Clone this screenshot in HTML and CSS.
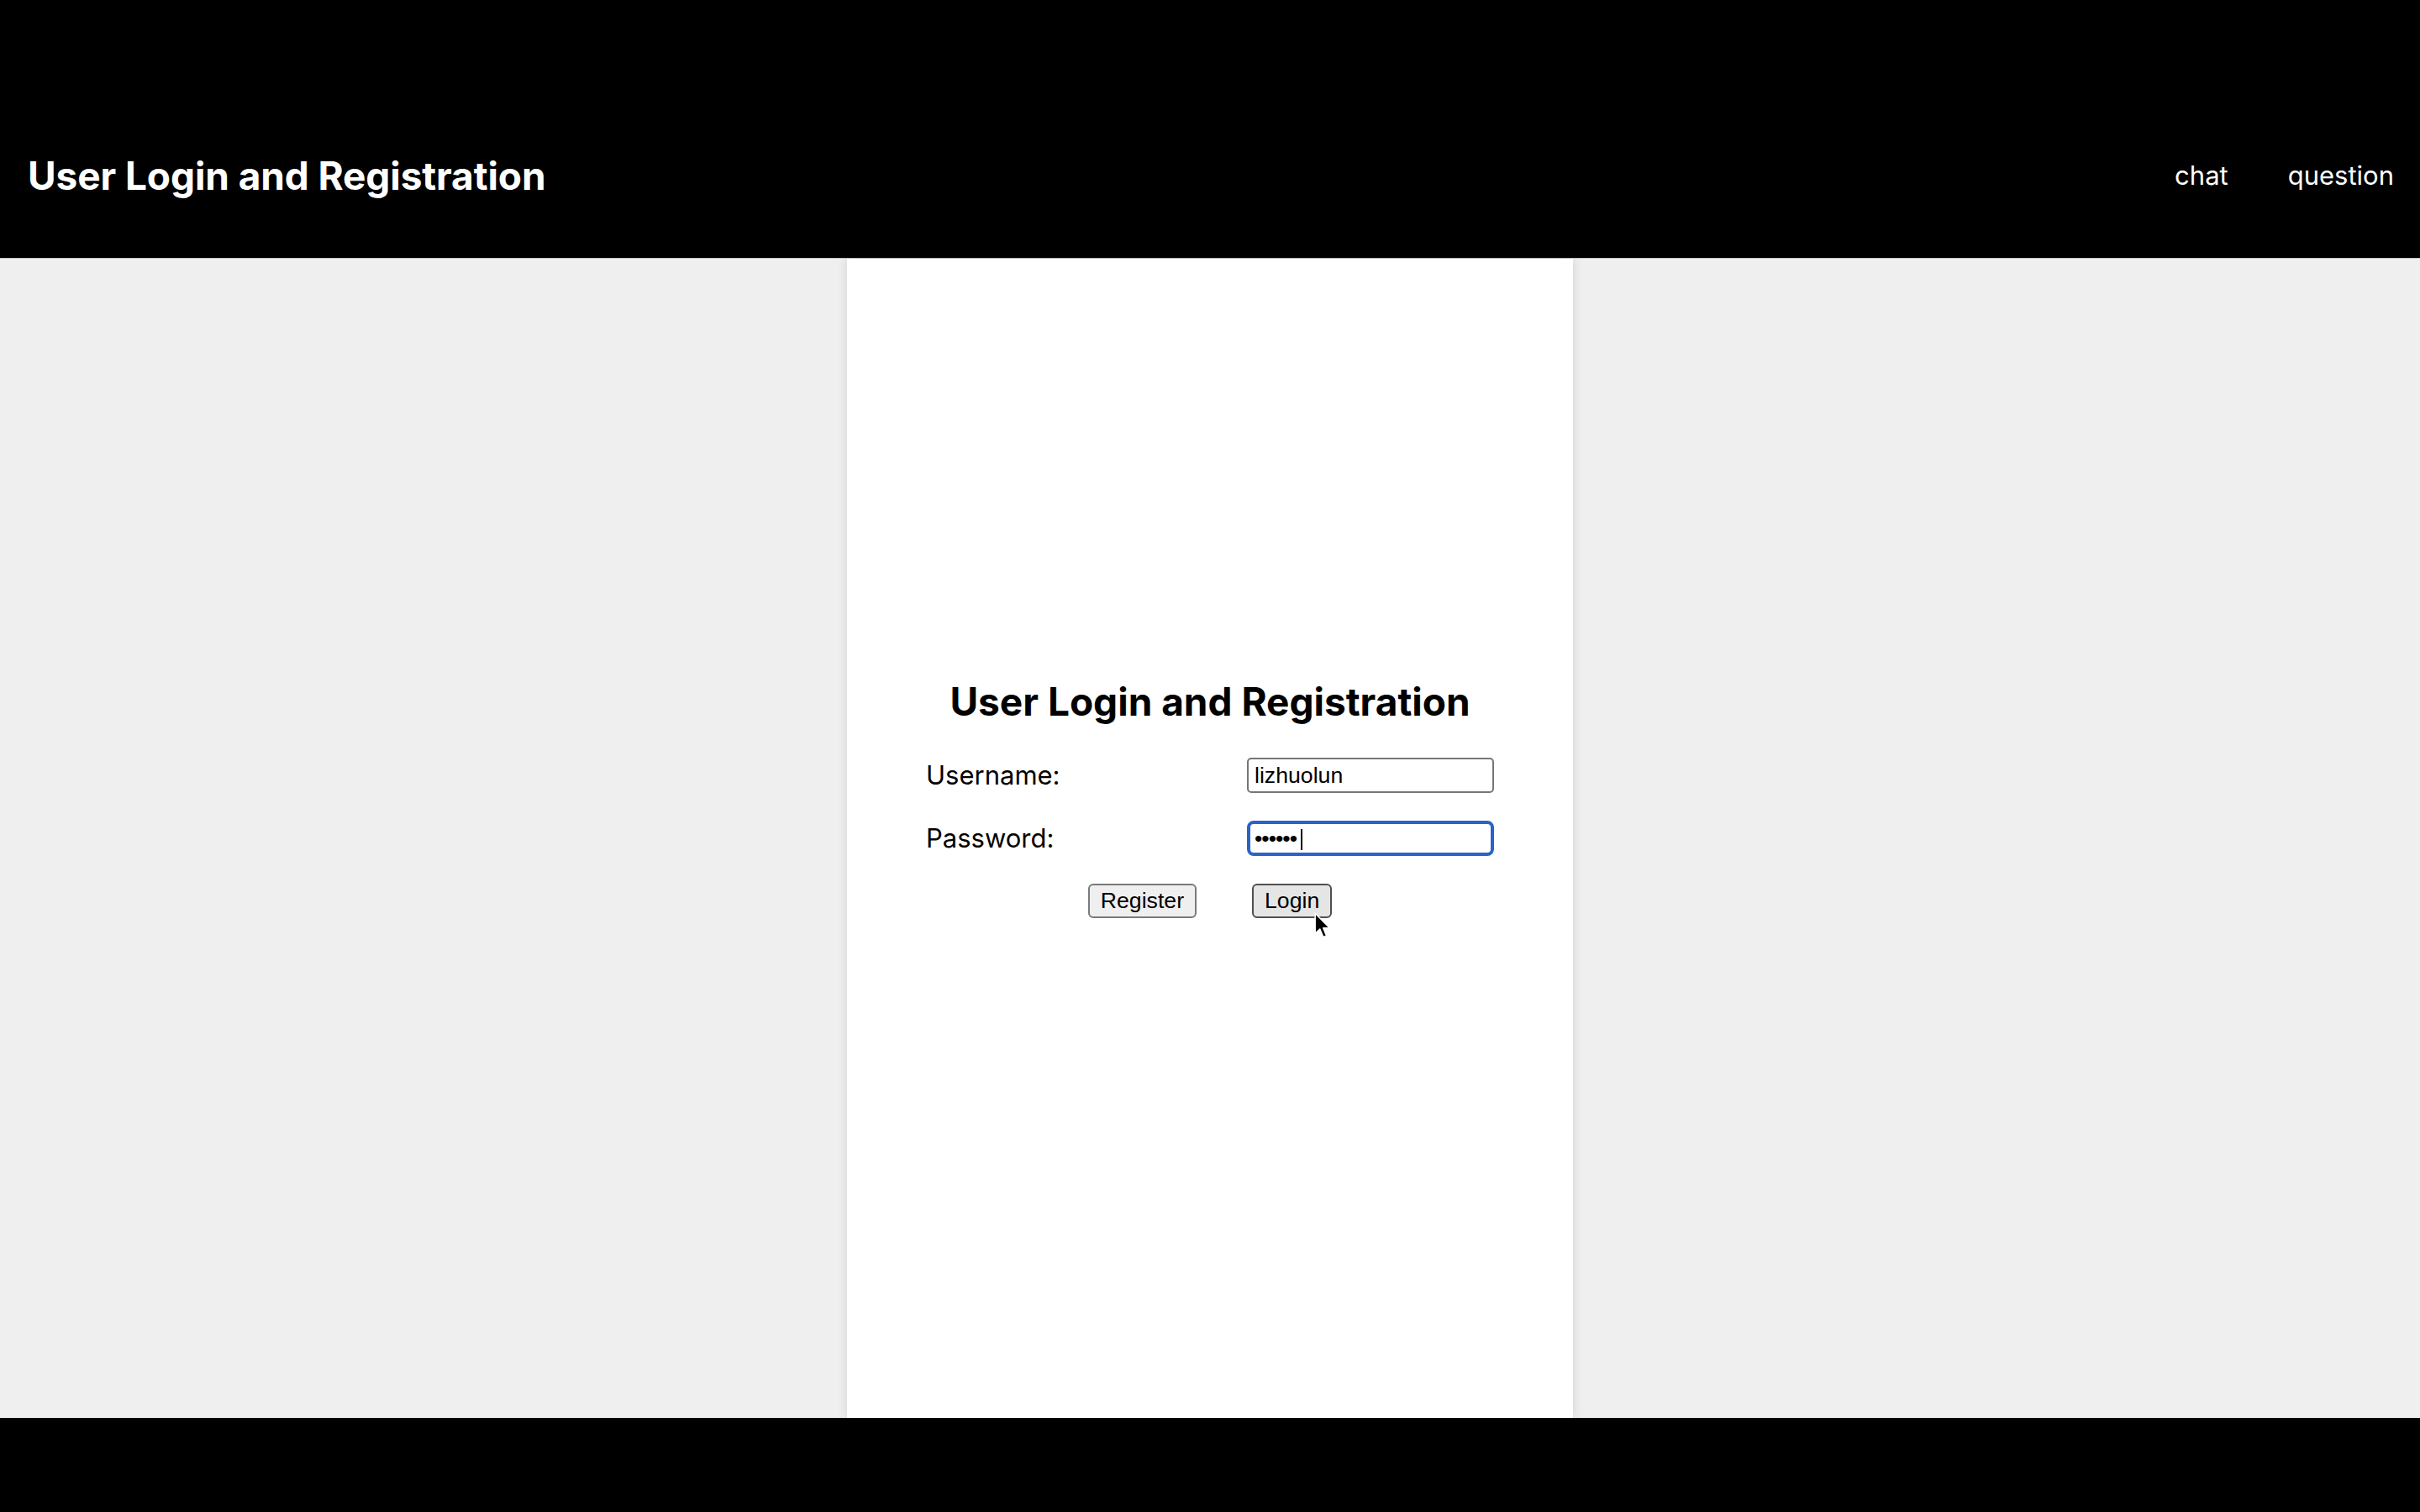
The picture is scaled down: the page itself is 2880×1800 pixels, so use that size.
FILE: index.html
```html
<!DOCTYPE html>
<html lang="en">
<head>
<meta charset="utf-8">
<title>User Login and Registration</title>
<link rel="stylesheet" href="styles.css">
</head>
<body>
<header class="site-header">
  <h1 class="site-title">User Login and Registration</h1>
  <nav class="site-nav">
    <a class="nav-link" href="#">chat</a>
    <a class="nav-link" href="#">question</a>
  </nav>
</header>
<main class="page">
  <section class="card">
    <h2 class="form-title">User Login and Registration</h2>
    <form class="login-form" onsubmit="return false;">
      <label class="field-label" for="username">Username:</label>
      <input class="field-input" id="username" type="text" value="lizhuolun">
      <label class="field-label" for="password">Password:</label>
      <span class="input-wrap">
        <input class="field-input field-input--focused" id="password" type="password" value="123456">
        <span class="caret"></span>
      </span>
      <div class="actions">
        <button class="btn" type="button">Register</button>
        <span class="btn-wrap">
          <button class="btn btn--hover" type="submit">Login</button>
          <svg class="pointer" width="20" height="32" viewBox="0 0 17 27" aria-hidden="true">
            <path d="M1 1 L1 21.5 L5.8 16.9 L9.2 25 L12.4 23.6 L9.1 15.8 L15.6 15.8 Z" fill="#000" stroke="#fff" stroke-width="1.3" stroke-linejoin="round"/>
          </svg>
        </span>
      </div>
    </form>
  </section>
</main>
<footer class="site-footer"></footer>
</body>
</html>
```

FILE: styles.css
```css
html, body {
  margin: 0;
  padding: 0;
  height: 100%;
}

body {
  display: flex;
  flex-direction: column;
  min-height: 1800px;
  background: #efefef;
  font-family: Inter, "Noto Sans", sans-serif;
  color: #000;
}

.site-header {
  height: 307px;
  box-sizing: border-box;
  padding: 110px 31px 0 33px;
  background: #000;
  border-bottom: 1px solid #c4c4c4;
  display: flex;
  align-items: center;
  justify-content: space-between;
  flex: 0 0 auto;
  height: 308px;
}

.site-title {
  margin: 0;
  font-size: 46px;
  line-height: 56px;
  font-weight: 700;
  color: #fff;
  letter-spacing: -0.1px;
}

.site-nav {
  display: flex;
  gap: 71px;
}

.nav-link {
  color: #fff;
  text-decoration: none;
  font-size: 31px;
  line-height: 40px;
}

.page {
  flex: 1 1 auto;
  display: flex;
  justify-content: center;
}

.card {
  width: 30%;
  background: #fff;
  box-shadow: 0 0 12px rgba(0, 0, 0, 0.13);
  padding-top: 499px;
  box-sizing: border-box;
}

.form-title {
  margin: 0;
  text-align: center;
  font-size: 46px;
  line-height: 56px;
  font-weight: 700;
}

.login-form {
  width: 676px;
  margin: 39px auto 0;
  display: grid;
  grid-template-columns: 1fr 294px;
  row-gap: 33px;
  align-items: center;
}

.field-label {
  font-size: 31px;
  line-height: 42px;
}

.field-input {
  box-sizing: border-box;
  width: 294px;
  height: 42px;
  margin: 0;
  padding: 0 7px;
  border: 2px solid #767676;
  border-radius: 5px;
  background: #fff;
  font-family: "Liberation Sans", Arial, sans-serif;
  font-size: 26.67px;
  color: #000;
  outline: none;
}

.field-input--focused {
  border: 4px solid #2a62c9;
  border-radius: 8px;
  padding: 0 5px;
  letter-spacing: -1px;
}

.input-wrap {
  position: relative;
  display: block;
  height: 42px;
}

.caret {
  position: absolute;
  left: 64px;
  top: 10px;
  width: 2px;
  height: 25px;
  background: #000;
}

.actions {
  grid-column: 1 / -1;
  display: flex;
  justify-content: center;
  gap: 66px;
}

.btn-wrap {
  position: relative;
  display: inline-block;
}

.btn {
  box-sizing: border-box;
  height: 41px;
  margin: 0;
  padding: 0 13px;
  border: 2px solid #7a7a7a;
  border-radius: 6px;
  background: #efefef;
  font-family: "Liberation Sans", Arial, sans-serif;
  font-size: 26.67px;
  color: #000;
}

.btn--hover {
  background: #e5e5e5;
  border-color: #4f4f4f;
}

.pointer {
  position: absolute;
  left: 74px;
  top: 34px;
}

.site-footer {
  flex: 0 0 112px;
  height: 112px;
  background: #000;
}
```
